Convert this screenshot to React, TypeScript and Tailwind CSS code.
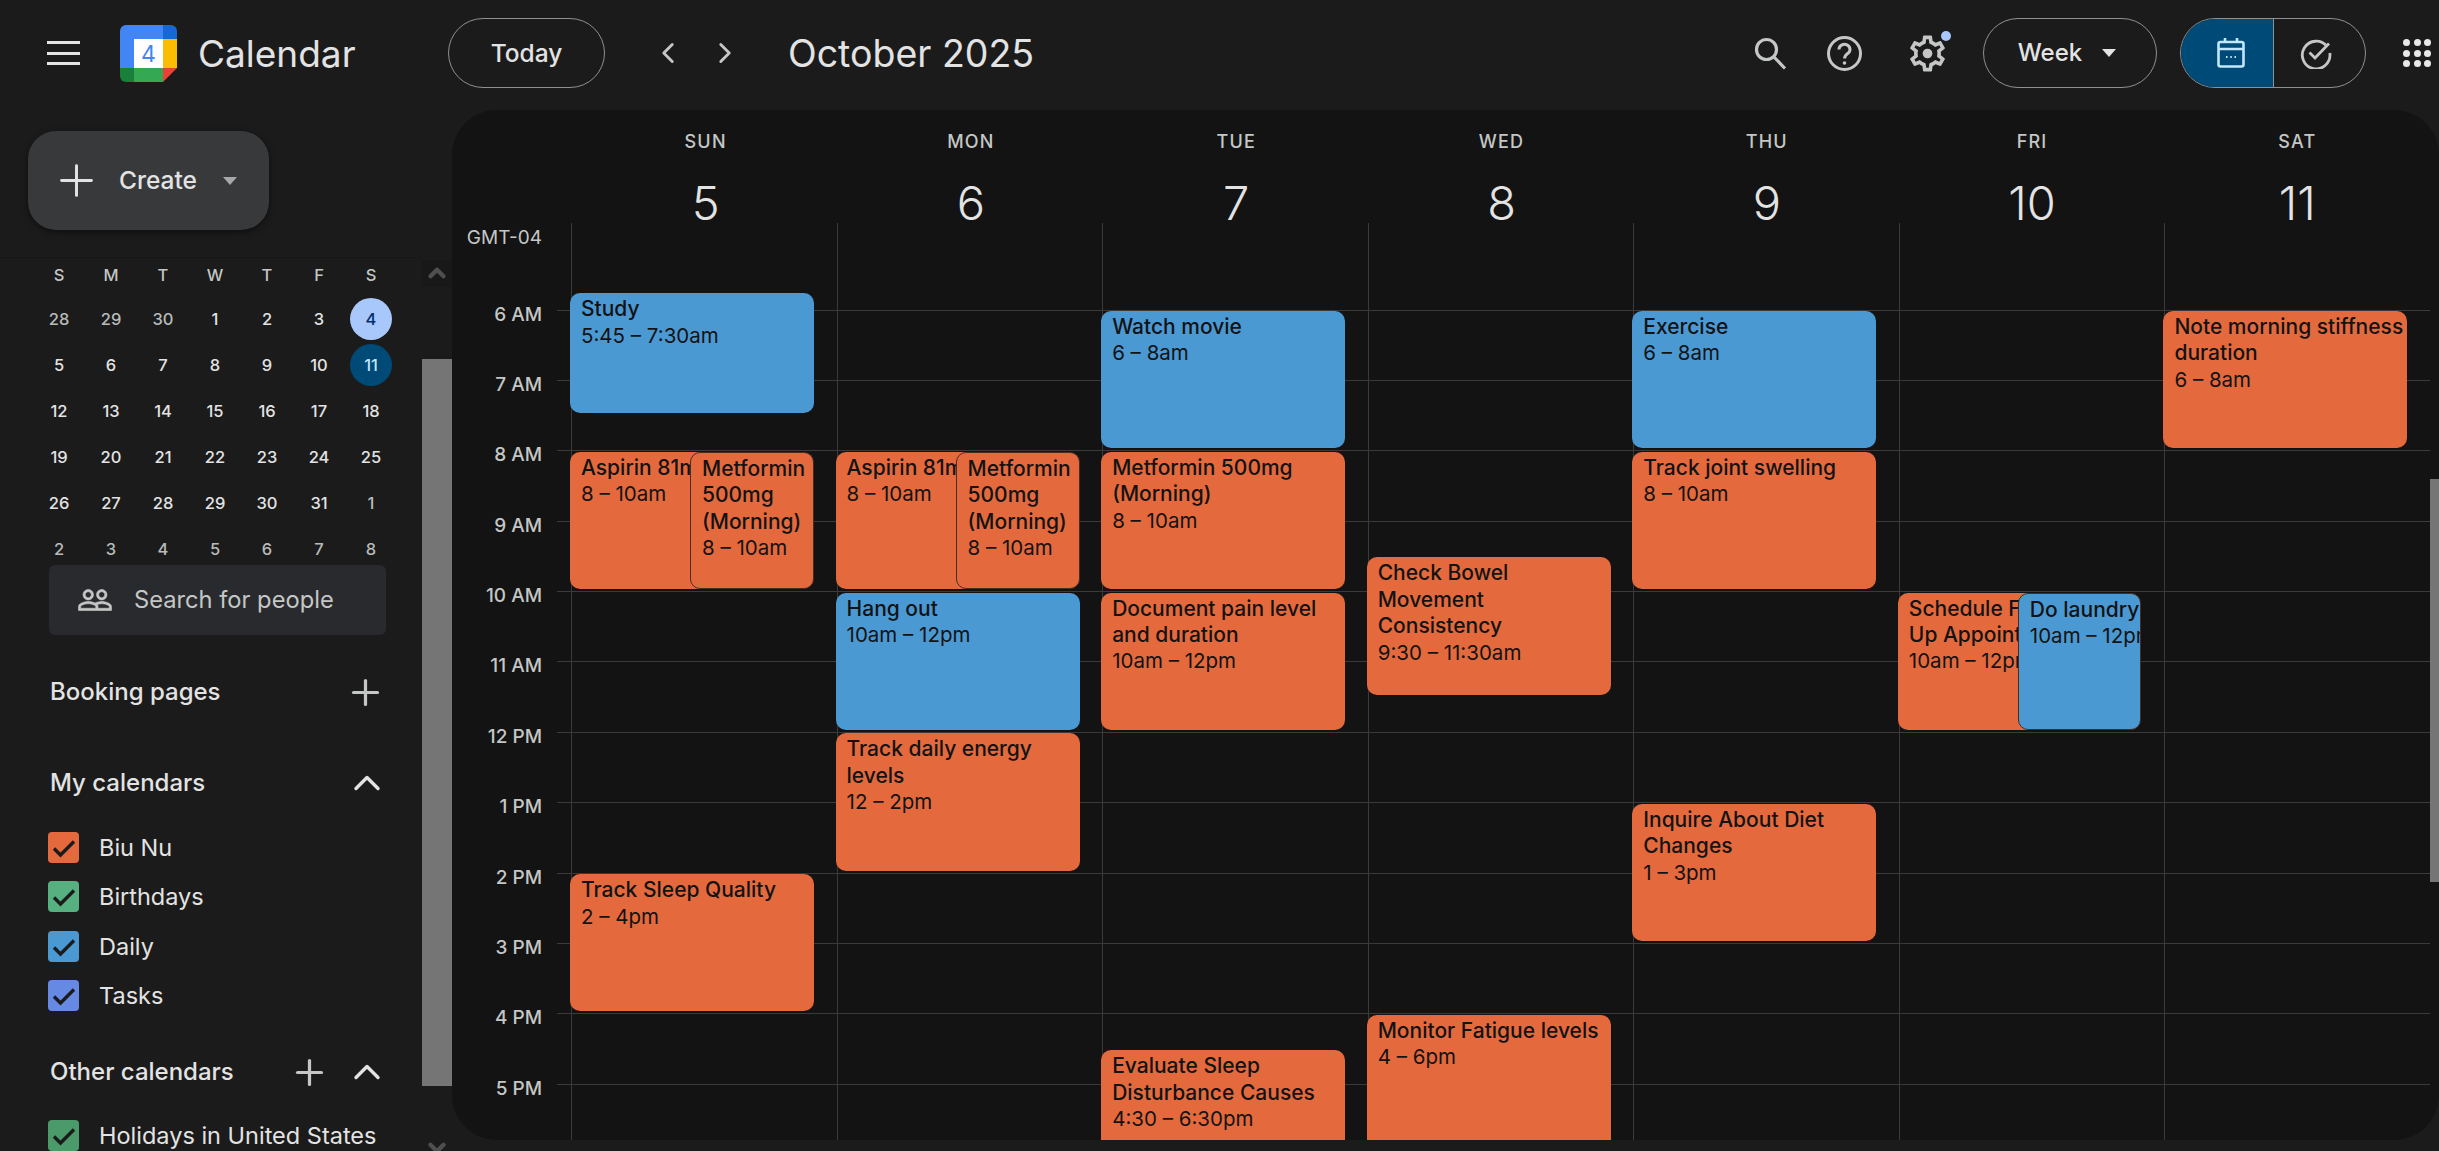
import { Plus, ChevronUp, ChevronDown, ChevronLeft, ChevronRight } from 'lucide-react';

const ORANGE = 'bg-[#e46a3e]';
const BLUE = 'bg-[#4b99d3]';
const HOUR = 70.4;
const FIRST_LINE = 86.5;

const hours = ['6 AM', '7 AM', '8 AM', '9 AM', '10 AM', '11 AM', '12 PM', '1 PM', '2 PM', '3 PM', '4 PM', '5 PM'];

const days = [
  { name: 'SUN', num: 5 },
  { name: 'MON', num: 6 },
  { name: 'TUE', num: 7 },
  { name: 'WED', num: 8 },
  { name: 'THU', num: 9 },
  { name: 'FRI', num: 10 },
  { name: 'SAT', num: 11 },
];

type CalEvent = {
  title: string;
  time: string;
  start: number;
  end: number;
  color: string;
  left?: number;
  width?: number;
  overlap?: boolean;
  nowrap?: boolean;
};

const events: CalEvent[][] = [
  [
    { title: 'Study', time: '5:45 – 7:30am', start: 5.75, end: 7.5, color: BLUE },
    { title: 'Aspirin 81mg', time: '8 – 10am', start: 8, end: 10, color: ORANGE, width: 170 },
    { title: 'Metformin 500mg (Morning)', time: '8 – 10am', start: 8, end: 10, color: ORANGE, left: 120, width: 124, overlap: true },
    { title: 'Track Sleep Quality', time: '2 – 4pm', start: 14, end: 16, color: ORANGE },
  ],
  [
    { title: 'Aspirin 81mg', time: '8 – 10am', start: 8, end: 10, color: ORANGE, width: 170 },
    { title: 'Metformin 500mg (Morning)', time: '8 – 10am', start: 8, end: 10, color: ORANGE, left: 120, width: 124, overlap: true },
    { title: 'Hang out', time: '10am – 12pm', start: 10, end: 12, color: BLUE },
    { title: 'Track daily energy levels', time: '12 – 2pm', start: 12, end: 14, color: ORANGE },
  ],
  [
    { title: 'Watch movie', time: '6 – 8am', start: 6, end: 8, color: BLUE },
    { title: 'Metformin 500mg (Morning)', time: '8 – 10am', start: 8, end: 10, color: ORANGE },
    { title: 'Document pain level and duration', time: '10am – 12pm', start: 10, end: 12, color: ORANGE },
    { title: 'Evaluate Sleep Disturbance Causes', time: '4:30 – 6:30pm', start: 16.5, end: 18.5, color: ORANGE },
  ],
  [
    { title: 'Check Bowel Movement Consistency', time: '9:30 – 11:30am', start: 9.5, end: 11.5, color: ORANGE },
    { title: 'Monitor Fatigue levels', time: '4 – 6pm', start: 16, end: 18, color: ORANGE },
  ],
  [
    { title: 'Exercise', time: '6 – 8am', start: 6, end: 8, color: BLUE },
    { title: 'Track joint swelling', time: '8 – 10am', start: 8, end: 10, color: ORANGE },
    { title: 'Inquire About Diet Changes', time: '1 – 3pm', start: 13, end: 15, color: ORANGE },
  ],
  [
    { title: 'Schedule Follow-Up Appointment', time: '10am – 12pm', start: 10, end: 12, color: ORANGE, width: 200 },
    { title: 'Do laundry', time: '10am – 12pm', start: 10, end: 12, color: BLUE, left: 120, width: 123, overlap: true, nowrap: true },
  ],
  [{ title: 'Note morning stiffness duration', time: '6 – 8am', start: 6, end: 8, color: ORANGE }],
];

const miniWeeks = [
  [28, 29, 30, 1, 2, 3, 4],
  [5, 6, 7, 8, 9, 10, 11],
  [12, 13, 14, 15, 16, 17, 18],
  [19, 20, 21, 22, 23, 24, 25],
  [26, 27, 28, 29, 30, 31, 1],
  [2, 3, 4, 5, 6, 7, 8],
];

function Caret({ className }: { className: string }) {
  return (
    <svg width="14" height="8" viewBox="0 0 14 8" className={className}>
      <path d="M0 0h14L7 8z" fill="currentColor" />
    </svg>
  );
}

function Logo() {
  return (
    <svg width="57" height="57" viewBox="0 0 57 57" className="shrink-0">
      <path d="M6 0h37v14H14v29H0V6a6 6 0 0 1 6-6z" fill="#4285f4" />
      <path d="M43 0h8a6 6 0 0 1 6 6v8H43z" fill="#1967d2" />
      <rect x="14" y="14" width="29" height="29" fill="#ffffff" />
      <rect x="43" y="14" width="14" height="29" fill="#fbbc04" />
      <path d="M14 43h29v14H14z" fill="#34a853" />
      <path d="M0 43h14v14H6a6 6 0 0 1-6-6z" fill="#188038" />
      <path d="M43 43h14L43 57z" fill="#ea4335" />
      <text x="28.5" y="37" textAnchor="middle" fontSize="23" fontFamily="Inter, sans-serif" fill="#4285f4">4</text>
    </svg>
  );
}

function TopBar() {
  return (
    <div className="mb-[4px] flex h-[106px] items-center text-[#e3e3e3]">
      <div className="ml-[47px] flex w-[33px] flex-col gap-[7.5px]">
        <div className="h-[3px] bg-[#e3e3e3]" />
        <div className="h-[3px] bg-[#e3e3e3]" />
        <div className="h-[3px] bg-[#e3e3e3]" />
      </div>
      <div className="ml-[40px]">
        <Logo />
      </div>
      <span className="ml-[21px] w-[250px] pt-[2px] text-[37px]">Calendar</span>
      <button className="flex h-[70px] w-[157px] items-center justify-center rounded-[35px] border border-[#8e918f] text-[24.5px] font-medium">
        Today
      </button>
      <ChevronLeft className="ml-[46px] text-[#c4c7c5]" size={34} strokeWidth={2} />
      <ChevronRight className="ml-[23px] text-[#c4c7c5]" size={34} strokeWidth={2} />
      <span className="ml-[46px] pt-[2px] text-[37.5px]">October 2025</span>

      <div className="flex-1" />

      <svg width="33" height="33" viewBox="0 0 33 33" fill="none" stroke="#c4c7c5" strokeWidth="3.2" className="mr-[39px]">
        <circle cx="12.5" cy="12.5" r="10" />
        <path d="M20 20l11 11.5" />
      </svg>
      <svg width="37" height="37" viewBox="0 0 37 37" fill="none" stroke="#c4c7c5" strokeWidth="3" className="mr-[43px]">
        <circle cx="18.5" cy="18.5" r="16" />
        <path d="M13 14.5a5.5 5 0 1 1 8.6 4c-2 1.5-3 2.3-3 5" />
        <circle cx="18.5" cy="28" r="1.8" fill="#c4c7c5" stroke="none" />
      </svg>
      <div className="relative mr-[34px] h-[43px] w-[43px]">
        <svg width="43" height="43" viewBox="0 0 24 24" fill="#c4c7c5">
          <path d="M19.43 12.98c.04-.32.07-.64.07-.98 0-.34-.03-.66-.07-.98l2.11-1.65c.19-.15.24-.42.12-.64l-2-3.46c-.09-.16-.26-.25-.44-.25-.06 0-.12.01-.17.03l-2.49 1c-.52-.4-1.08-.73-1.69-.98l-.38-2.65C14.46 2.18 14.25 2 14 2h-4c-.25 0-.46.18-.49.42l-.38 2.65c-.61.25-1.17.59-1.69.98l-2.49-1c-.06-.02-.12-.03-.18-.03-.17 0-.34.09-.43.25l-2 3.46c-.13.22-.07.49.12.64l2.11 1.65c-.04.32-.07.65-.07.98 0 .33.03.66.07.98l-2.11 1.65c-.19.15-.24.42-.12.64l2 3.46c.09.16.26.25.44.25.06 0 .12-.01.17-.03l2.49-1c.52.4 1.08.73 1.69.98l.38 2.65c.03.24.24.42.49.42h4c.25 0 .46-.18.49-.42l.38-2.65c.61-.25 1.17-.59 1.69-.98l2.49 1c.06.02.12.03.18.03.17 0 .34-.09.43-.25l2-3.46c.12-.22.07-.49-.12-.64l-2.11-1.65zm-1.98-1.71c.04.31.05.52.05.73 0 .21-.02.43-.05.73l-.14 1.13.89.7 1.08.84-.7 1.21-1.27-.51-1.04-.42-.9.68c-.43.32-.84.56-1.25.73l-1.06.43-.16 1.13-.2 1.35h-1.4l-.19-1.35-.16-1.13-1.06-.43c-.43-.18-.83-.41-1.23-.71l-.91-.7-1.06.43-1.27.51-.7-1.21 1.08-.84.89-.7-.14-1.13c-.03-.31-.05-.54-.05-.74s.02-.43.05-.73l.14-1.13-.89-.7-1.08-.84.7-1.21 1.27.51 1.04.42.9-.68c.43-.32.84-.56 1.25-.73l1.06-.43.16-1.13.2-1.35h1.39l.19 1.35.16 1.13 1.06.43c.43.18.83.41 1.23.71l.91.7 1.06-.43 1.27-.51.7 1.21-1.07.85-.89.7.14 1.13z" />
          <circle cx="12" cy="12" r="2.7" />
        </svg>
        <span className="absolute right-[-2px] top-[-1px] h-[10px] w-[10px] rounded-full bg-[#a8c7fa]" />
      </div>
      <button className="flex h-[70px] w-[174px] items-center justify-center gap-[20px] rounded-[35px] border border-[#8e918f] pr-[6px] text-[24px] font-medium">
        Week
        <Caret className="text-[#e3e3e3]" />
      </button>
      <div className="ml-[23px] flex h-[70px] w-[186px] overflow-hidden rounded-[35px] border border-[#8e918f]">
        <div className="flex w-[93px] items-center justify-center border-r border-[#8e918f] bg-[#004a77] pl-[8px]">
          <svg width="28" height="30" viewBox="0 0 28 30" fill="none" stroke="#c2e7ff" strokeWidth="2.6">
            <rect x="1.5" y="4" width="25" height="24.5" rx="2" />
            <path d="M1.5 11h25M8 0v4M20 0v4" />
            <path d="M9 19h1.5M13.3 19h1.5M17.5 19h1.5" strokeWidth="2.2" />
          </svg>
        </div>
        <div className="flex flex-1 items-center justify-center pr-[8px]">
          <svg width="32" height="32" viewBox="0 0 32 32" fill="none" stroke="#c4c7c5" strokeWidth="2.8">
            <path d="M27 9.5A13.8 13.8 0 1 0 29.8 16" />
            <path d="M9.5 15.5l5.5 5.5L29 6.5" />
          </svg>
        </div>
      </div>
      <div className="ml-[37px] mr-[8px] grid w-[28px] grid-cols-3 gap-x-[3.5px] gap-y-[3.5px]">
        {Array.from({ length: 9 }).map((_, i) => (
          <span key={i} className="h-[7px] w-[7px] rounded-full bg-[#e8e8e8]" />
        ))}
      </div>
    </div>
  );
}

function CalCheck({ label, color }: { label: string; color: string }) {
  return (
    <div className="flex h-[49.3px] items-center text-[23.5px] text-[#e3e3e3]">
      <span className={`flex h-[31px] w-[31px] shrink-0 items-center justify-center rounded-[4px] ${color}`}>
        <svg width="31" height="31" viewBox="0 0 31 31" fill="none" stroke="#1b1b1b" strokeWidth="3.4">
          <path d="M6 16.5l6.5 6.5L26 9.5" />
        </svg>
      </span>
      <span className="ml-[20px] whitespace-nowrap">{label}</span>
    </div>
  );
}

function Sidebar() {
  return (
    <div className="flex w-[452px] shrink-0">
      <div className="w-[422px] overflow-hidden">
        <div className="h-[148px] border-b border-[#171717] pl-[28px] pt-[21px]">
          <button className="flex h-[99px] w-[241px] items-center rounded-[28px] bg-[#37393b] pl-[23px] text-[#e3e3e3] shadow-[0_2px_6px_rgba(0,0,0,0.5)]">
            <Plus size={51} strokeWidth={1.4} />
            <span className="ml-[17px] text-[24.5px] font-medium">Create</span>
            <Caret className="ml-[26px] text-[#a8a8a8]" />
          </button>
        </div>

        <div className="pl-[33px]">
          <div className="grid h-[38px] w-[364px] grid-cols-7 items-center pb-[4px] text-[16.5px] font-medium text-[#c4c7c5]">
            {['S', 'M', 'T', 'W', 'T', 'F', 'S'].map((d, i) => (
              <span key={i} className="text-center">{d}</span>
            ))}
          </div>
          {miniWeeks.map((week, w) => (
            <div key={w} className="grid h-[46px] w-[364px] grid-cols-7 items-center text-[16.5px] font-medium">
              {week.map((d, i) => {
                const otherMonth = (w === 0 && d > 20) || w === 5 || (w === 4 && d === 1);
                const isToday = w === 0 && i === 6;
                const isPicked = w === 1 && i === 6;
                return (
                  <span key={i} className="flex justify-center">
                    {isToday || isPicked ? (
                      <span
                        className={`flex h-[42px] w-[42px] items-center justify-center rounded-full ${
                          isToday ? 'bg-[#a8c7fa] text-[#062e6f]' : 'bg-[#004a77] text-[#c2e7ff]'
                        }`}
                      >
                        {d}
                      </span>
                    ) : (
                      <span className={otherMonth ? 'text-[#b8bbb9]' : 'text-[#e3e3e3]'}>{d}</span>
                    )}
                  </span>
                );
              })}
            </div>
          ))}
        </div>

        <div className="-mt-[7px] ml-[49px] flex h-[70px] w-[337px] items-center rounded-[6px] bg-[#292a2d] pl-[28px] text-[#c4c7c5]">
          <svg width="36" height="36" viewBox="0 0 24 24" fill="currentColor" stroke="currentColor" strokeWidth="0.4">
            <path d="M16.5 13c-1.2 0-3.07.34-4.5 1-1.43-.67-3.3-1-4.5-1C5.33 13 1 14.08 1 16.25V19h22v-2.75c0-2.17-4.33-3.25-6.5-3.25zm-4 4.5h-10v-1.25c0-.54 2.56-1.75 5-1.75s5 1.21 5 1.75v1.25zm9 0H14v-1.25c0-.46-.2-.86-.52-1.22.88-.3 1.96-.53 3.02-.53 2.44 0 5 1.21 5 1.75v1.25zM7.5 12c1.93 0 3.5-1.57 3.5-3.5S9.43 5 7.5 5 4 6.57 4 8.5 5.57 12 7.5 12zm0-5.5c1.1 0 2 .9 2 2s-.9 2-2 2-2-.9-2-2 .9-2 2-2zm9 5.5c1.93 0 3.5-1.57 3.5-3.5S18.43 5 16.5 5 13 6.57 13 8.5s1.57 3.5 3.5 3.5zm0-5.5c1.1 0 2 .9 2 2s-.9 2-2 2-2-.9-2-2 .9-2 2-2z" />
          </svg>
          <span className="ml-[21px] text-[23.7px]">Search for people</span>
        </div>

        <div className="ml-[50px] mr-[36px] text-[#e3e3e3]">
          <div className="mt-[33px] flex h-[48px] items-center justify-between text-[24px] font-medium">
            Booking pages
            <Plus size={41} strokeWidth={1.9} className="text-[#c4c7c5]" />
          </div>
          <div className="mt-[43px] flex h-[48px] items-center justify-between text-[24px] font-medium">
            My calendars
            <ChevronUp size={44} strokeWidth={1.85} className="-mr-[3px]" />
          </div>
          <div className="-ml-[2px] mt-[16px]">
            <CalCheck label="Biu Nu" color="bg-[#e46a3e]" />
            <CalCheck label="Birthdays" color="bg-[#56b07f]" />
            <CalCheck label="Daily" color="bg-[#4b99d3]" />
            <CalCheck label="Tasks" color="bg-[#6689e3]" />
          </div>
          <div className="mt-[28px] flex h-[48px] items-center text-[24px] font-medium">
            Other calendars
            <div className="flex-1" />
            <Plus size={41} strokeWidth={1.9} className="mr-[15px] text-[#c4c7c5]" />
            <ChevronUp size={44} strokeWidth={1.85} className="-mr-[3px]" />
          </div>
          <div className="-ml-[2px] mt-[15px]">
            <CalCheck label="Holidays in United States" color="bg-[#4b9a69]" />
          </div>
        </div>
      </div>

      <div className="flex w-[30px] flex-col">
        <div className="h-[150px] shrink-0" />
        <div className="flex h-[27px] shrink-0 justify-center bg-[#181818]">
          <ChevronUp size={26} strokeWidth={4} className="text-[#4f4f4f]" />
        </div>
        <div className="h-[72px] shrink-0" />
        <div className="h-[727px] shrink-0 bg-[#757575]" />
        <div className="flex flex-1 items-end justify-center">
          <ChevronDown size={26} strokeWidth={4} className="-mb-[10px] text-[#4f4f4f]" />
        </div>
      </div>
    </div>
  );
}

function EventCard({ ev }: { ev: CalEvent }) {
  const left = -2 + (ev.left ?? 0);
  const top = FIRST_LINE + (ev.start - 6) * HOUR + 1.5;
  const height = (ev.end - ev.start) * HOUR - 3.5;
  return (
    <div
      className={`absolute overflow-hidden rounded-[10px] pl-[11px] pr-[2px] pt-[3px] text-[20.5px] leading-[26.4px] text-[#131314] ${ev.color} ${
        ev.overlap ? 'border border-[#4a2c20]' : ''
      }`}
      style={{ left, top, height, width: ev.width ?? 244 }}
    >
      <div className={`text-[21px] font-medium ${ev.nowrap ? 'whitespace-nowrap' : ''}`}>{ev.title}</div>
      <div className="whitespace-nowrap">{ev.time}</div>
    </div>
  );
}

function CalendarPanel() {
  return (
    <div className="relative mb-[11px] flex-1 overflow-hidden rounded-[45px] bg-[#131313] text-[#c4c7c5]">
      <div className="flex h-[113px] pr-[9px]">
        <div className="w-[121px] shrink-0" />
        <div className="grid flex-1 grid-cols-7">
          {days.map((d) => (
            <div key={d.name} className="flex flex-col items-center pt-[21px]">
              <span className="text-[18px] leading-[22px] font-medium tracking-[1.2px]">{d.name}</span>
              <span className="mt-[22px] text-[47px] leading-[56px] font-light text-[#e3e3e3]">{d.num}</span>
            </div>
          ))}
        </div>
      </div>

      <div className="relative h-[917px] overflow-hidden pr-[9px]">
        <div className="h-[86.5px] w-[90px] pt-[1px] text-right text-[19px] leading-[28px]">GMT-04</div>
        {hours.map((h) => (
          <div key={h} className="flex h-[70.4px]">
            <div className="flex w-[105px] shrink-0 justify-end pr-[15px]">
              <span className="-mt-[9px] text-[19px] leading-[28px] font-medium">{h}</span>
            </div>
            <div className="flex-1 border-t border-[#3a3a3a]" />
          </div>
        ))}

        <div className="absolute bottom-0 left-[119px] right-[9px] top-0 grid grid-cols-7">
          {events.map((list, i) => (
            <div key={i} className="relative border-l border-[#3a3a3a]">
              {list.map((ev) => (
                <EventCard key={ev.title} ev={ev} />
              ))}
            </div>
          ))}
        </div>
      </div>

      <div className="absolute right-0 top-[369px] h-[403px] w-[9px] bg-[#757575]" />
    </div>
  );
}

export default function App() {
  return (
    <div className="flex h-[1151px] flex-col overflow-hidden bg-[#1b1b1b] font-['Inter',sans-serif]">
      <TopBar />
      <div className="flex min-h-0 flex-1">
        <Sidebar />
        <CalendarPanel />
      </div>
    </div>
  );
}
